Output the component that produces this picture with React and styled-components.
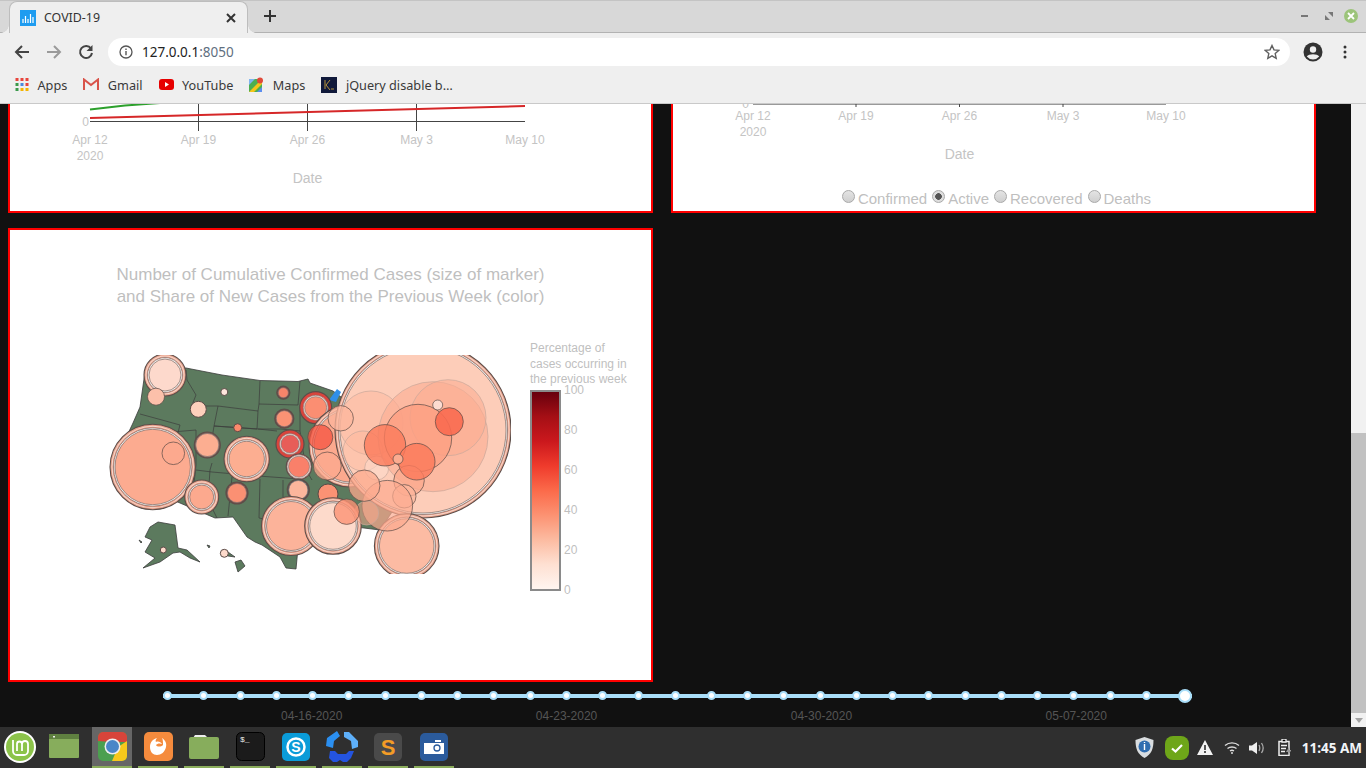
import styled, { createGlobalStyle } from "styled-components";

const GlobalStyle = createGlobalStyle`
  html, body, #root { margin: 0; height: 100%; }
  body { overflow: hidden; background: #111; font-family: "Liberation Sans", Arial, sans-serif; }
`;

const TICKS = [
  { x: 90, label: "Apr 12" },
  { x: 198.5, label: "Apr 19" },
  { x: 307.5, label: "Apr 26" },
  { x: 416.5, label: "May 3" },
  { x: 525, label: "May 10" },
];
const RIGHT_TICKS = [
  { x: 753, label: "Apr 12" },
  { x: 856, label: "Apr 19" },
  { x: 959.5, label: "Apr 26" },
  { x: 1063, label: "May 3" },
  { x: 1166, label: "May 10" },
];

const BUBBLES = [
  { x: 152.7, y: 467, r: 42.7, fill: "#fcab90", rings: true },
  { x: 173.3, y: 453.3, r: 11.3, fill: "#fca98e", thin: true },
  { x: 165, y: 375, r: 21, fill: "#fdd9cc", rings: true },
  { x: 156, y: 396.7, r: 8.5, fill: "#fcc0aa", thin: true },
  { x: 224.3, y: 392, r: 3.5, fill: "#fee5dc" },
  { x: 198.3, y: 409.3, r: 8, fill: "#fdd0bc" },
  { x: 283.3, y: 392.7, r: 6.5, fill: "#f7846a", ring: "#7a4a44" },
  { x: 284.3, y: 418.7, r: 9.5, fill: "#fb9274", ring: "#7a4a44" },
  { x: 237.7, y: 427.7, r: 4, fill: "#fb8a6c" },
  { x: 207.3, y: 445, r: 13, fill: "#fcae91", ring: "#7a5a54" },
  { x: 246.7, y: 459, r: 22.7, fill: "#fcae91", rings: true },
  { x: 201.7, y: 497, r: 17, fill: "#fca98e", rings: true },
  { x: 237, y: 493, r: 11, fill: "#fb9073", ring: "#7a4a44" },
  { x: 315.7, y: 407.7, r: 16, fill: "#fb8e72", ring: "#d9443c", inner: 11 },
  { x: 290, y: 444, r: 14, fill: "#e85d58", ring: "#d9443c", inner: 9 },
  { x: 299, y: 466.7, r: 12.7, fill: "#f9806a", ring: "#d9534a", inner: 10.5 },
  { x: 298.3, y: 490, r: 11, fill: "#fcb69c", ring: "#555" },
  { x: 291, y: 526, r: 29.5, fill: "#fcb39a", rings: true },
  { x: 328, y: 494, r: 10, fill: "#fb9274" },
  { x: 350, y: 446, r: 41, fill: "#fca98e", rings: true },
  { x: 333, y: 526, r: 28.3, fill: "#fddacb", rings: true },
  { x: 423, y: 430, r: 88, fill: "#fdcdb9", rings: true },
  { x: 406.7, y: 546, r: 32.3, fill: "#fcbba3", rings: true },
  { x: 371, y: 423, r: 32, fill: "#fcb69c", alpha: 0.45, faint: true },
  { x: 363, y: 451, r: 20, fill: "#fcb69c", alpha: 0.4, faint: true },
  { x: 376.7, y: 468, r: 12, fill: "#fddacb", alpha: 0.6, faint: true },
  { x: 433, y: 436.7, r: 55, fill: "#fcad93", alpha: 0.65, faint: true },
  { x: 448, y: 417.7, r: 38, fill: "#fcad93", alpha: 0.6, faint: true },
  { x: 418, y: 438, r: 33.7, fill: "#fc9f82", alpha: 0.8, thin: true },
  { x: 385, y: 445.3, r: 20.7, fill: "#fb7a5b", alpha: 0.8, thin: true },
  { x: 409, y: 480.7, r: 15.3, fill: "#fca98e", alpha: 0.75, thin: true },
  { x: 416.7, y: 461.7, r: 18.3, fill: "#fb7a5b", alpha: 0.82, thin: true },
  { x: 398, y: 459, r: 5, fill: "#fcac90", thin: true },
  { x: 449.3, y: 421.7, r: 14, fill: "#f96a50", alpha: 0.9, thin: true },
  { x: 437.7, y: 405, r: 5, fill: "#fddbd0", thin: true },
  { x: 404.3, y: 496.3, r: 11.7, fill: "#fcb69c", alpha: 0.75, thin: true },
  { x: 387.3, y: 505.7, r: 25.3, fill: "#fca98e", alpha: 0.7, thin: true },
  { x: 366.7, y: 513, r: 12, fill: "#fca98e", alpha: 0.5, faint: true },
  { x: 364.3, y: 485.7, r: 15.7, fill: "#fca98e", alpha: 0.75, thin: true },
  { x: 346.7, y: 511.7, r: 12.7, fill: "#fb9274", alpha: 0.8, thin: true },
  { x: 340.7, y: 418.3, r: 12.7, fill: "#fcb69c", alpha: 0.75, thin: true },
  { x: 327.3, y: 466, r: 14, fill: "#fca98e", alpha: 0.75, thin: true },
  { x: 320.3, y: 437.2, r: 12.5, fill: "#f5533f", alpha: 0.75, thin: true },
  { x: 163.3, y: 550, r: 3, fill: "#fddacb" },
  { x: 224.3, y: 553.3, r: 4, fill: "#fddacb" },
];

const STATE_LINES = [
  "M140 414 L162 420 L180 425",
  "M186 370 L187 380 L196 395 L192 405 L203 407 L205 406 L218 406",
  "M218 406 L258 411 L257 429 L214 426",
  "M218 406 L214 426 L211 445 L196 443",
  "M180 425 L176 440",
  "M196 430 L196 465 L192 500",
  "M172 432 L196 430",
  "M214 426 L258 429 L277 431",
  "M260 381 L259 404 L298 405 L300 381",
  "M258 411 L259 404",
  "M258 429 L281 429 L300 431 L300 405",
  "M212 463 L210 470 L208 500 L217 518",
  "M196 470 L212 472 L258 476 L300 479",
  "M260 479 L259 518 L283 523 L283 480",
  "M232 477 L228 516",
  "M300 431 L306 470 L312 480",
];

const SLIDER_DOTS = Array.from({ length: 28 }, (_, i) => i);
const DOCK = ["folderWindow", "chrome", "firefox", "files", "terminal", "skype", "app", "sublime", "camera"];

const Browser = styled.div`
  height: 100vh;
  display: flex;
  flex-direction: column;
  overflow: hidden;
`;
const TabStrip = styled.div`
  height: 33px;
  flex: none;
  background: #d8d8d8;
  display: flex;
  align-items: flex-end;
  box-sizing: border-box;
  padding-left: 9px;
  border-top: 1px solid #c4c4c4;
  border-bottom: 1px solid #b2b2b2;
`;
const Tab = styled.div`
  position: relative;
  width: 239px;
  height: 32px;
  margin-bottom: -1px;
  box-sizing: border-box;
  background: #efefef;
  border-radius: 8px 8px 0 0;
  border: 1px solid #bdbdbd;
  border-bottom: none;
  display: flex;
  align-items: center;
  padding: 0 11px 0 10px;
  gap: 8px;
  font: 12.4px "Noto Sans", sans-serif;
  color: #333;
  &::before,
  &::after {
    content: "";
    position: absolute;
    bottom: 0;
    width: 8px;
    height: 8px;
  }
  &::before {
    left: -9px;
    background: radial-gradient(circle at 0 0, transparent 7.5px, #efefef 8px);
  }
  &::after {
    right: -9px;
    background: radial-gradient(circle at 100% 0, transparent 7.5px, #efefef 8px);
  }
`;
const TabTitle = styled.span`
  flex: 1;
`;
const NewTab = styled.div`
  margin: 0 0 0 16px;
  height: 32px;
  display: flex;
  align-items: center;
`;
const WindowButtons = styled.div`
  margin-left: auto;
  height: 32px;
  display: flex;
  align-items: center;
  gap: 11px;
  padding-right: 8px;
`;
const RestoreIcon = styled.svg`
  margin-left: 6px;
`;
const Toolbar = styled.div`
  height: 37px;
  flex: none;
  background: #efefef;
  display: flex;
  align-items: center;
  padding: 0 12px 0 14px;
  box-sizing: border-box;
`;
const NavIcons = styled.div`
  display: flex;
  gap: 16px;
  width: 94px;
  flex: none;
`;
const AddressBar = styled.div`
  width: 1182px;
  height: 28px;
  background: #fff;
  border-radius: 14px;
  display: flex;
  align-items: center;
  padding: 0 10px 0 11px;
  box-sizing: border-box;
  gap: 9px;
  font: 13.5px "Noto Sans", sans-serif;
  color: #222;
`;
const Port = styled.span`
  color: #5f6f80;
`;
const Url = styled.span`
  flex: 1;
`;
const ProfileIcons = styled.div`
  flex: none;
  display: flex;
  align-items: center;
  gap: 20px;
  margin-left: 13px;
`;
const Bookmarks = styled.div`
  height: 34px;
  flex: none;
  background: #efefef;
  border-bottom: 1px solid #c9c9c9;
  box-sizing: border-box;
  display: flex;
  align-items: center;
  padding: 0 0 4px 15px;
  gap: 16px;
  font: 12.7px "Noto Sans", sans-serif;
  color: #3a3a3a;
`;
const Bookmark = styled.div`
  display: flex;
  align-items: center;
  gap: 8.5px;
`;
const Viewport = styled.div`
  flex: 1;
  min-height: 0;
  display: flex;
  background: #111;
`;
const Content = styled.div`
  flex: 1;
  padding-left: 8px;
  display: flex;
  flex-direction: column;
`;
const CardGrid = styled.div`
  display: grid;
  grid-template-columns: 645px 645px;
  column-gap: 18px;
  row-gap: 15px;
`;
const Card = styled.div`
  box-sizing: border-box;
  background: #fff;
  border: 2px solid #f00;
  color: #bfbfbf;
`;
const CutCard = styled(Card)`
  height: 109px;
  border-top: none;
  display: flex;
  flex-direction: column;
`;
const MapCard = styled(Card)`
  height: 454px;
  padding-top: 34px;
`;
const Chart = styled.svg`
  display: block;
  flex: none;
`;
const RadioRow = styled.div`
  display: flex;
  justify-content: center;
  align-items: center;
  padding-left: 6px;
  height: 27px;
  padding-top: 1px;
  box-sizing: border-box;
  font-size: 15px;
  gap: 5px;
`;
const RadioLabel = styled.label`
  display: flex;
  align-items: center;
  gap: 3px;
`;
const Radio = styled.input`
  appearance: none;
  margin: -3px 0 0;
  width: 13px;
  height: 13px;
  border-radius: 50%;
  border: 1px solid #a9a9a9;
  background: ${(p) =>
    p.checked
      ? "radial-gradient(circle, #555 0 3px, #ddd 3.6px)"
      : "linear-gradient(#e4e4e4, #cfcfcf)"};
`;
const MapTitle = styled.div`
  text-align: center;
  font-size: 17px;
  line-height: 22px;
`;
const MapRow = styled.div`
  display: flex;
  margin-top: 47px;
`;
const LegendColumn = styled.div`
  width: 120px;
  margin-left: 19px;
  font-size: 12px;
  line-height: 15.5px;
  margin-top: -14px;
`;
const LegendTitle = styled.div`
  height: 49px;
  white-space: nowrap;
`;
const LegendBody = styled.div`
  display: flex;
  gap: 3px;
`;
const ColorBar = styled.div`
  width: 31px;
  height: 201px;
  box-sizing: border-box;
  border: 2px solid #8a8a8a;
  background: linear-gradient(
    to top,
    #fff5f0 0%,
    #fee0d2 12.5%,
    #fcbba1 25%,
    #fc9272 37.5%,
    #fb6a4a 50%,
    #ef3b2c 62.5%,
    #cb181d 75%,
    #a50f15 87.5%,
    #67000d 100%
  );
`;
const ColorTicks = styled.div`
  margin-top: -7px;
  display: flex;
  flex-direction: column;
  justify-content: space-between;
  height: 216px;
`;
const SliderArea = styled.div`
  flex: 1;
  padding: 7px 159px 0 155px;
`;
const SliderTrack = styled.div`
  position: relative;
  height: 13px;
  display: flex;
  align-items: center;
  justify-content: space-between;
  &::before {
    content: "";
    position: absolute;
    left: 0;
    right: 0;
    top: 5px;
    height: 4px;
    background: #a9def9;
  }
`;
const SliderDot = styled.span`
  position: relative;
  width: 5px;
  height: 5px;
  border-radius: 50%;
  background: #fff;
  border: 2px solid #a9def9;
`;
const SliderHandle = styled.span`
  position: relative;
  width: 10px;
  height: 10px;
  border-radius: 50%;
  background: #fff;
  border: 2px solid #a9def9;
`;
const SliderMarks = styled.div`
  display: flex;
  justify-content: space-between;
  padding: 7px 85px 0 118px;
  font-size: 12px;
  color: #555;
`;
const Scrollbar = styled.div`
  width: 15px;
  flex: none;
  background: #f1f1f1;
  display: flex;
  flex-direction: column;
  justify-content: flex-end;
  align-items: center;
`;
const ScrollThumb = styled.div`
  width: 100%;
  height: 280px;
  background: #c1c1c1;
`;
const ScrollArrow = styled.div`
  height: 14px;
  display: flex;
  align-items: center;
  &::after {
    content: "";
    border: 4px solid transparent;
    border-top: 5px solid #a3a3a3;
    border-bottom: none;
  }
`;
const Taskbar = styled.div`
  height: 41px;
  flex: none;
  background: #2f2f2f;
  display: flex;
  align-items: stretch;
`;
const Dock = styled.div`
  display: flex;
  gap: 6px;
`;
const DockItem = styled.div`
  width: 40px;
  box-sizing: border-box;
  display: flex;
  align-items: center;
  justify-content: center;
  background: ${(p) => (p.$active ? "#666" : "transparent")};
  border-bottom: 2px solid ${(p) => (p.$running ? "#8bad5c" : "transparent")};
`;
const WindowIconBox = styled.svg`
  margin-right: 4px;
`;
const Tray = styled.div`
  margin-left: auto;
  display: flex;
  align-items: center;
  padding-right: 4px;
`;
const TraySlot = styled.div`
  display: flex;
  justify-content: center;
  width: ${(p) => p.$w}px;
`;
const Clock = styled.div`
  color: #f2f5f8;
  font: bold 13.5px "Noto Sans", sans-serif;
  margin-left: 4px;
  white-space: nowrap;
`;

const Favicon = () => (
  <svg width="16" height="16" viewBox="0 0 16 16">
    <rect width="16" height="16" fill="#1e9cf0" />
    <path d="M3 9v4M5.500 6v7M8 9v4M10.500 4v9M13 7v6" stroke="#fff" strokeWidth="1.200" />
  </svg>
);
const Cross = ({ color = "#333" }) => (
  <svg width="10" height="10" viewBox="0 0 10 10">
    <path d="M1 1l8 8M9 1l-8 8" stroke={color} strokeWidth="2" />
  </svg>
);
const Plus = () => (
  <svg width="12" height="12" viewBox="0 0 12 12">
    <path d="M6 0v12M0 6h12" stroke="#333" strokeWidth="2" />
  </svg>
);
const Arrow = ({ flip, color }) => (
  <svg width="16" height="16" viewBox="0 0 16 16">
    <g transform={flip ? "translate(16 0) scale(-1 1)" : undefined}>
      <path d="M15 8H2M8 2L2 8l6 6" fill="none" stroke={color} strokeWidth="2" />
    </g>
  </svg>
);
const Reload = () => (
  <svg width="16" height="16" viewBox="0 0 16 16">
    <path d="M13 4.500A6 6 0 1 0 14 9" fill="none" stroke="#444" strokeWidth="2" />
    <path d="M14.500 1v6h-6z" fill="#444" />
  </svg>
);
const Info = () => (
  <svg width="14" height="14" viewBox="0 0 14 14">
    <circle cx="7" cy="7" r="6" fill="none" stroke="#555" strokeWidth="1.300" />
    <path d="M7 6v4.200M7 3.600v1.400" stroke="#555" strokeWidth="1.400" />
  </svg>
);
const StarIcon = () => (
  <svg width="16" height="16" viewBox="0 0 16 16">
    <path d="M8 1.500l2 4.400 4.700.5-3.500 3.200 1 4.700L8 11.900l-4.200 2.400 1-4.700L1.300 6.400 6 5.900z" fill="none" stroke="#5f5f5f" strokeWidth="1.400" />
  </svg>
);
const Account = () => (
  <svg width="20" height="20" viewBox="0 0 20 20">
    <circle cx="10" cy="10" r="9.500" fill="#333" />
    <circle cx="10" cy="7.500" r="3.200" fill="#efefef" />
    <path d="M3.800 14.500c2-3 10.400-3 12.400 0a8 8 0 0 1-12.400 0z" fill="#efefef" />
  </svg>
);
const Dots = () => (
  <svg width="4" height="14" viewBox="0 0 4 14">
    <circle cx="2" cy="2" r="1.500" fill="#333" />
    <circle cx="2" cy="7" r="1.500" fill="#333" />
    <circle cx="2" cy="12" r="1.500" fill="#333" />
  </svg>
);
const AppsIcon = () => {
  const colors = ["#e8453c", "#e8453c", "#e8453c", "#3c9a4c", "#4a89dc", "#e8453c", "#3c9a4c", "#f4b400", "#f4b400"];
  return (
    <svg width="14" height="13" viewBox="0 0 13 13">
      {colors.map((c, i) => (
        <rect key={i} x={(i % 3) * 5} y={Math.floor(i / 3) * 5} width="3" height="3" fill={c} />
      ))}
    </svg>
  );
};
const GmailIcon = () => (
  <svg width="16" height="13" viewBox="0 0 16 13">
    <path d="M1 12V1.500L8 7l7-5.500V12" fill="none" stroke="#d9534a" strokeWidth="2" />
    <path d="M3 12V6l5 3.500L13 6v6" fill="#f2f2f2" />
  </svg>
);
const YoutubeIcon = () => (
  <svg width="15" height="11" viewBox="0 0 15 11">
    <rect width="15" height="11" rx="3" fill="#e60000" />
    <path d="M6 3l4 2.500L6 8z" fill="#fff" />
  </svg>
);
const MapsIcon = () => (
  <svg width="15" height="15" viewBox="0 0 15 15">
    <rect y="2" width="13" height="13" fill="#4caf50" />
    <path d="M0 15L13 2v5L5 15z" fill="#f5c518" />
    <path d="M0 2h6L0 8z" fill="#7fb4f0" />
    <path d="M8 15l5-5v5z" fill="#5b8def" />
    <circle cx="11" cy="3.500" r="3" fill="#e04a3a" />
  </svg>
);
const JqueryIcon = () => (
  <svg width="16" height="16" viewBox="0 0 16 16">
    <rect width="16" height="16" fill="#10193a" />
    <path d="M4 3v9M9 3L5 8l4 5M10 12h3" stroke="#b4923a" strokeWidth="1" fill="none" />
  </svg>
);

const Axis = ({ ticks, y, y2, dateY, dateX }) => (
  <g fontSize="12" fill="#c4c4c4" textAnchor="middle">
    {ticks.map((t) => (
      <text key={t.x} x={t.x} y={y}>
        {t.label}
      </text>
    ))}
    <text x={ticks[0].x} y={y2}>
      2020
    </text>
    <text x={dateX} y={dateY} fontSize="14">
      Date
    </text>
  </g>
);

const LeftChart = () => (
  <Chart width="641" height="107" viewBox="10 104 641 107">
    {TICKS.slice(1, 4).map((t) => (
      <line key={t.x} x1={t.x} x2={t.x} y1="104" y2="131" stroke="#444" />
    ))}
    <line x1="90" x2="525" y1="121.500" y2="121.500" stroke="#444" />
    <path d="M90 109.500L125 105.500L160 103" fill="none" stroke="#2ca02c" strokeWidth="2" />
    <path d="M90 118L525 106" fill="none" stroke="#d62728" strokeWidth="2" />
    <text x="89" y="126" textAnchor="end" fontSize="12" fill="#c4c4c4">
      0
    </text>
    <Axis ticks={TICKS} y={144} y2={160} dateX={307.5} dateY={183} />
  </Chart>
);

const RightChart = () => (
  <Chart width="641" height="80" viewBox="673 104 641 80">
    <line x1="753" x2="1166" y1="104.500" y2="104.500" stroke="#999" />
    {RIGHT_TICKS.slice(1, 4).map((t) => (
      <line key={t.x} x1={t.x} x2={t.x} y1="104" y2="107" stroke="#444" />
    ))}
    <text x="749" y="108" textAnchor="end" fontSize="12" fill="#c4c4c4">
      0
    </text>
    <Axis ticks={RIGHT_TICKS} y={120} y2={136} dateX={959.5} dateY={159} />
  </Chart>
);

const Bubble = ({ b }) => {
  const stroke = b.faint ? "#c9a79b" : "#5a4a46";
  return (
    <g>
      {b.rings && (
        <>
          <circle cx={b.x} cy={b.y} r={b.r} fill="#e9a08a" stroke="#5c4e4a" strokeWidth="1.100" />
          <circle cx={b.x} cy={b.y} r={b.r - 1.500} fill="#f6d8cc" />
          <circle cx={b.x} cy={b.y} r={b.r - 2.500} fill="#f19b82" />
          <circle cx={b.x} cy={b.y} r={b.r - 3.500} fill="#f6f0ec" stroke="#7a6c68" strokeWidth="0.700" />
          <circle cx={b.x} cy={b.y} r={b.r - 5} fill={b.fill} stroke="#7a6c68" strokeWidth="0.700" />
        </>
      )}
      {!b.rings && b.ring && (
        <>
          <circle cx={b.x} cy={b.y} r={b.r} fill={b.ring} stroke="#5c4e4a" strokeWidth="1.200" />
          {b.inner && <circle cx={b.x} cy={b.y} r={b.inner + 1.500} fill="#f3d8d0" stroke="#777" strokeWidth="0.6" />}
          <circle cx={b.x} cy={b.y} r={b.inner || b.r - 1.500} fill={b.fill} stroke="#777" strokeWidth="0.6" />
        </>
      )}
      {!b.rings && !b.ring && (
        <circle
          cx={b.x}
          cy={b.y}
          r={b.r}
          fill={b.fill}
          fillOpacity={b.alpha ?? 1}
          stroke={stroke}
          strokeWidth={b.thin || b.faint ? 0.7 : 1}
        />
      )}
    </g>
  );
};

const UsMap = () => (
  <Chart width="501" height="219" viewBox="10 355 501 219">
    <g fill="#5c7a5e" stroke="#3c3c3c" strokeWidth="0.8">
      <path d="M145 372L186 368L222 375L260 380.500L298 381.500L308 379L310 383L333 391L345 400L400 440L400 500L380 530L340 525L312 530L298 548L296 569L286 568L280 557L262 545L255 542L247 537L233 517L215 518L180 503L150 490L125 440L133 423L140 407z" />
      <path d="M150 527L158 522L175 525L178 548L187 550L200 562L190 558L180 552L173 553L160 562L143 568L155 558L145 552L152 540L145 537z" />
      <path d="M235 562L241 560L245 566L238 572z" />
      <path d="M207 545L210 546L209 548zM222 550L228 552L235 557L228 556z" />
      <path d="M139 540L142 542L141 543z" />
    </g>
    <g fill="none" stroke="#3c3c3c" strokeWidth="0.7">
      {STATE_LINES.map((d) => (
        <path key={d} d={d} />
      ))}
    </g>
    <path d="M329 400L337 389L341 392L336 402z" fill="#2f8fe8" />
    {BUBBLES.map((b) => (
      <Bubble key={`${b.x}-${b.y}`} b={b} />
    ))}
  </Chart>
);

const DockIcon = ({ name }) => {
  if (name === "folderWindow")
    return (
      <WindowIconBox width="30" height="25" viewBox="0 0 30 25">
        <rect width="30" height="24" rx="1" fill="#87ad5c" />
        <rect width="30" height="5" fill="#5f8040" />
        <rect x="4" y="2" width="2" height="1.500" fill="#eee" />
      </WindowIconBox>
    );
  if (name === "chrome")
    return (
      <svg width="29" height="29" viewBox="0 0 29 29">
        <rect width="29" height="29" rx="5" fill="#4b9f4f" />
        <path d="M0 9V5a5 5 0 0 1 5-5h19a5 5 0 0 1 5 5v5H14z" fill="#d8443a" />
        <path d="M29 9v15a5 5 0 0 1-5 5h-10l6-14z" fill="#f6c81c" />
        <circle cx="14.500" cy="14.500" r="8" fill="#eee" />
        <circle cx="14.500" cy="14.500" r="6.500" fill="#4a86c8" />
      </svg>
    );
  if (name === "firefox")
    return (
      <svg width="29" height="29" viewBox="0 0 29 29">
        <rect width="29" height="29" rx="5" fill="#f58b3d" />
        <path d="M6 15c0-5 3-8 7-9-1 1-2 3-1 4 2-1 5 0 6 2-2-1-5-.5-6 1 1 2 5 2 7 0 0-3 0-5-1-7 3 2 5 5 4 9-1 5-5 8-9 8-4 0-7-3-7-8z" fill="#fff" />
      </svg>
    );
  if (name === "files")
    return (
      <svg width="30" height="27" viewBox="0 0 30 27">
        <path d="M4 5l2-3h10l3 3z" fill="#eee" />
        <rect y="4" width="30" height="22" rx="2" fill="#87ad5c" />
      </svg>
    );
  if (name === "terminal")
    return (
      <svg width="29" height="29" viewBox="0 0 29 29">
        <rect x="0.500" y="0.500" width="28" height="28" rx="5" fill="#1b1b1b" stroke="#000" />
        <text x="4" y="10" fill="#eee" fontSize="8" fontFamily="Liberation Mono, monospace">
          $_
        </text>
      </svg>
    );
  if (name === "skype")
    return (
      <svg width="28" height="28" viewBox="0 0 28 28">
        <rect width="28" height="28" rx="5" fill="#0a9bd8" />
        <circle cx="14" cy="14" r="8.500" fill="none" stroke="#fff" strokeWidth="2.500" />
        <text x="14" y="19" fill="#fff" fontSize="14" fontWeight="bold" textAnchor="middle">
          S
        </text>
      </svg>
    );
  if (name === "app")
    return (
      <svg width="32" height="32" viewBox="0 0 32 32">
        <path d="M11 0l3 5-6 5-1 7-7-2 1-8z" fill="#2b8ff0" />
        <path d="M18 1l5 0 9 9v6l-6 2-1-8-7-4z" fill="#5eb0fa" />
        <path d="M4 20l5 0 3 3h8l3-3h5l-3 7-4 4h-4l-3-2-3 2h-4l-4-4z" fill="#2454e0" />
      </svg>
    );
  if (name === "sublime")
    return (
      <svg width="28" height="28" viewBox="0 0 28 28">
        <rect width="28" height="28" rx="5" fill="#4a4a4a" />
        <text x="14" y="22" fill="#f39c26" fontSize="22" fontWeight="bold" textAnchor="middle">
          S
        </text>
      </svg>
    );
  return (
    <svg width="28" height="28" viewBox="0 0 28 28">
      <rect width="28" height="28" rx="5" fill="#2b5b9c" />
      <path d="M4 10h20v11H4zM15 7h6v2h-6z" fill="#fff" />
      <circle cx="17" cy="15" r="3" fill="none" stroke="#2b5b9c" strokeWidth="1.300" />
    </svg>
  );
};

const MintLogo = () => (
  <svg width="32" height="32" viewBox="0 0 32 32">
    <circle cx="16" cy="16" r="16" fill="#fff" />
    <circle cx="16" cy="16" r="14" fill="#8cc34a" />
    <path d="M9 9v11a4 4 0 0 0 4 4h7a4 4 0 0 0 4-4v-7a3 3 0 0 0-6 0v7M18 13a2.500 2.500 0 0 0-5 0v7" fill="none" stroke="#fff" strokeWidth="1.800" />
  </svg>
);
const ShieldIcon = () => (
  <svg width="19" height="21" viewBox="0 0 19 21">
    <path d="M9.500 0l9 3c0 9-2 14-9 18-7-4-9-9-9-18z" fill="#d9dde0" />
    <circle cx="9.500" cy="9.500" r="6" fill="#2f6db0" />
    <path d="M9.500 7v6M9.500 5v1" stroke="#fff" strokeWidth="1.400" />
  </svg>
);
const GreenCheck = () => (
  <svg width="24" height="24" viewBox="0 0 24 24">
    <rect width="24" height="24" rx="8" fill="#6ea619" />
    <path d="M7 12.500l3.500 3L17 9" fill="none" stroke="#fff" strokeWidth="2.200" />
  </svg>
);
const Warning = () => (
  <svg width="16" height="15" viewBox="0 0 16 15">
    <path d="M8 0l8 15H0z" fill="#f3f3f3" />
    <path d="M8 5v5M8 11v2" stroke="#2f2f2f" strokeWidth="1.600" />
  </svg>
);
const Wifi = () => (
  <svg width="16" height="13" viewBox="0 0 16 13">
    <path d="M1 4.500c4-3.500 10-3.500 14 0M3.500 7.500c2.500-2 6.500-2 9 0M6 10c1.200-.8 2.800-.8 4 0" fill="none" stroke="#ddd" strokeWidth="1.400" />
    <circle cx="8" cy="12" r="1" fill="#ddd" />
  </svg>
);
const Volume = () => (
  <svg width="15" height="14" viewBox="0 0 15 14">
    <path d="M0 4.500h3L8 1v12L3 9.500H0z" fill="#eee" />
    <path d="M10 4c1 2 1 4 0 6M12.500 2c2 3 2 7 0 10" fill="none" stroke="#aaa" strokeWidth="1.300" />
  </svg>
);
const BatteryClip = () => (
  <svg width="15" height="17" viewBox="-2 0 15 17">
    <path d="M1 2.500h10v14H1z" fill="none" stroke="#eee" strokeWidth="1.500" />
    <path d="M4 0h4v3H4zM3 6.500h6M3 9.500h5M3 12.500h4" stroke="#eee" strokeWidth="1.300" />
    <path d="M11 8l-3 5h2.500l-1 4 4-6h-2.500z" fill="#999" />
  </svg>
);

export default function App() {
  return (
    <Browser>
      <GlobalStyle />
      <TabStrip>
        <Tab>
          <Favicon />
          <TabTitle>COVID-19</TabTitle>
          <Cross />
        </Tab>
        <NewTab>
          <Plus />
        </NewTab>
        <WindowButtons>
          <svg width="7" height="2" viewBox="0 0 7 2">
            <rect width="7" height="2" fill="#777" />
          </svg>
          <RestoreIcon width="8" height="8" viewBox="0 0 8 8">
            <path d="M3 0h5v5zM0 3l5 5H0z" fill="#777" />
          </RestoreIcon>
          <svg width="14" height="14" viewBox="0 0 14 14">
            <circle cx="7" cy="7" r="7" fill="#9cc47a" />
            <path d="M4 4l6 6M10 4l-6 6" stroke="#fff" strokeWidth="1.800" />
          </svg>
        </WindowButtons>
      </TabStrip>
      <Toolbar>
        <NavIcons>
          <Arrow color="#444" />
          <Arrow flip color="#9a9a9a" />
          <Reload />
        </NavIcons>
        <AddressBar>
          <Info />
          <Url>
            127.0.0.1<Port>:8050</Port>
          </Url>
          <StarIcon />
        </AddressBar>
        <ProfileIcons>
          <Account />
          <Dots />
        </ProfileIcons>
      </Toolbar>
      <Bookmarks>
        <Bookmark>
          <AppsIcon />
          Apps
        </Bookmark>
        <Bookmark>
          <GmailIcon />
          Gmail
        </Bookmark>
        <Bookmark>
          <YoutubeIcon />
          YouTube
        </Bookmark>
        <Bookmark>
          <MapsIcon />
          Maps
        </Bookmark>
        <Bookmark>
          <JqueryIcon />
          jQuery disable b…
        </Bookmark>
      </Bookmarks>
      <Viewport>
        <Content>
          <CardGrid>
            <CutCard>
              <LeftChart />
            </CutCard>
            <CutCard>
              <RightChart />
              <RadioRow>
                <RadioLabel>
                  <Radio type="radio" readOnly />
                  Confirmed
                </RadioLabel>
                <RadioLabel>
                  <Radio type="radio" checked readOnly />
                  Active
                </RadioLabel>
                <RadioLabel>
                  <Radio type="radio" readOnly />
                  Recovered
                </RadioLabel>
                <RadioLabel>
                  <Radio type="radio" readOnly />
                  Deaths
                </RadioLabel>
              </RadioRow>
            </CutCard>
            <MapCard>
              <MapTitle>
                Number of Cumulative Confirmed Cases (size of marker)
                <br />
                and Share of New Cases from the Previous Week (color)
              </MapTitle>
              <MapRow>
                <UsMap />
                <LegendColumn>
                  <LegendTitle>
                    Percentage of
                    <br />
                    cases occurring in
                    <br />
                    the previous week
                  </LegendTitle>
                  <LegendBody>
                    <ColorBar />
                    <ColorTicks>
                      {[100, 80, 60, 40, 20, 0].map((v) => (
                        <span key={v}>{v}</span>
                      ))}
                    </ColorTicks>
                  </LegendBody>
                </LegendColumn>
              </MapRow>
            </MapCard>
          </CardGrid>
          <SliderArea>
            <SliderTrack>
              {SLIDER_DOTS.map((i) => (
                <SliderDot key={i} />
              ))}
              <SliderHandle />
            </SliderTrack>
            <SliderMarks>
              <span>04-16-2020</span>
              <span>04-23-2020</span>
              <span>04-30-2020</span>
              <span>05-07-2020</span>
            </SliderMarks>
          </SliderArea>
        </Content>
        <Scrollbar>
          <ScrollThumb />
          <ScrollArrow />
        </Scrollbar>
      </Viewport>
      <Taskbar>
        <Dock>
          <DockItem>
            <MintLogo />
          </DockItem>
          {DOCK.map((name, i) => (
            <DockItem key={name} $active={i === 1} $running={i > 0}>
              <DockIcon name={name} />
            </DockItem>
          ))}
        </Dock>
        <Tray>
          <TraySlot $w={38}>
            <ShieldIcon />
          </TraySlot>
          <TraySlot $w={26}>
            <GreenCheck />
          </TraySlot>
          <TraySlot $w={30}>
            <Warning />
          </TraySlot>
          <TraySlot $w={24}>
            <Wifi />
          </TraySlot>
          <TraySlot $w={26}>
            <Volume />
          </TraySlot>
          <TraySlot $w={28}>
            <BatteryClip />
          </TraySlot>
          <Clock>11:45 AM</Clock>
        </Tray>
      </Taskbar>
    </Browser>
  );
}
